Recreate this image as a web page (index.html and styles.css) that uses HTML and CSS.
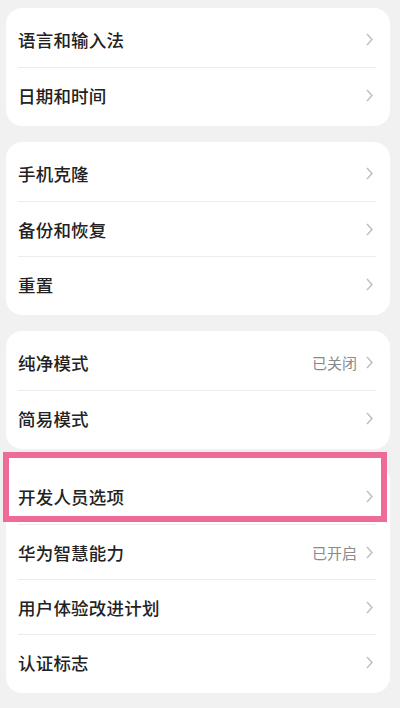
FILE: index.html
```html
<!DOCTYPE html>
<html lang="zh-CN">
<head>
<meta charset="utf-8">
<link rel="stylesheet" href="styles.css">
</head>
<body>
<div class="page">
  <div class="card">
    <div class="row"><span class="label">语言和输入法</span><svg class="chev" viewBox="0 0 7 13"><path d="M1 1 L6 6.5 L1 12"/></svg></div>
    <div class="row"><span class="label">日期和时间</span><svg class="chev" viewBox="0 0 7 13"><path d="M1 1 L6 6.5 L1 12"/></svg></div>
  </div>
  <div class="card">
    <div class="row"><span class="label">手机克隆</span><svg class="chev" viewBox="0 0 7 13"><path d="M1 1 L6 6.5 L1 12"/></svg></div>
    <div class="row"><span class="label">备份和恢复</span><svg class="chev" viewBox="0 0 7 13"><path d="M1 1 L6 6.5 L1 12"/></svg></div>
    <div class="row"><span class="label">重置</span><svg class="chev" viewBox="0 0 7 13"><path d="M1 1 L6 6.5 L1 12"/></svg></div>
  </div>
  <div class="card">
    <div class="row"><span class="label">纯净模式</span><span class="value">已关闭</span><svg class="chev" viewBox="0 0 7 13"><path d="M1 1 L6 6.5 L1 12"/></svg></div>
    <div class="row"><span class="label">简易模式</span><svg class="chev" viewBox="0 0 7 13"><path d="M1 1 L6 6.5 L1 12"/></svg></div>
  </div>
  <div class="card highlighted">
    <div class="row"><span class="label">开发人员选项</span><svg class="chev" viewBox="0 0 7 13"><path d="M1 1 L6 6.5 L1 12"/></svg></div>
    <div class="row"><span class="label">华为智慧能力</span><span class="value">已开启</span><svg class="chev" viewBox="0 0 7 13"><path d="M1 1 L6 6.5 L1 12"/></svg></div>
    <div class="row"><span class="label">用户体验改进计划</span><svg class="chev" viewBox="0 0 7 13"><path d="M1 1 L6 6.5 L1 12"/></svg></div>
    <div class="row"><span class="label">认证标志</span><svg class="chev" viewBox="0 0 7 13"><path d="M1 1 L6 6.5 L1 12"/></svg></div>
  </div>
</div>
</body>
</html>
```
FILE: styles.css
```css
html, body {
  margin: 0;
  background: #f1f1f1;
}
body {
  font-family: "Noto Sans CJK SC", "Noto Sans", sans-serif;
  color: #222;
}
.page {
  display: flex;
  flex-direction: column;
  gap: 16px;
  padding: 8px 10px 0 6px;
}
.card {
  background: #fff;
  border-radius: 16px;
  padding: 4px 0;
}
.row {
  display: flex;
  align-items: center;
  height: 55px;
  margin: 0 14px 0 12px;
  padding-right: 3px;
  box-sizing: border-box;
}
.row + .row {
  border-top: 1px solid #ececec;
}
.label {
  flex: 1;
  font-size: 17.5px;
  font-weight: 500;
  letter-spacing: 0.2px;
}
.value {
  font-size: 15px;
  color: #8a8a8a;
  margin-right: 9px;
}
.chev {
  width: 7px;
  height: 13px;
  fill: none;
  stroke: #bdbdbd;
  stroke-width: 1.4;
}
.highlighted {
  position: relative;
}
.highlighted::before {
  content: "";
  position: absolute;
  top: -7px;
  left: 3px;
  right: 9px;
  height: 16px;
  background: #fff;
}
.highlighted::after {
  content: "";
  position: absolute;
  top: -13px;
  left: -3px;
  right: 3px;
  height: 70px;
  border: 6px solid #ee6a97;
  box-sizing: border-box;
}
```
